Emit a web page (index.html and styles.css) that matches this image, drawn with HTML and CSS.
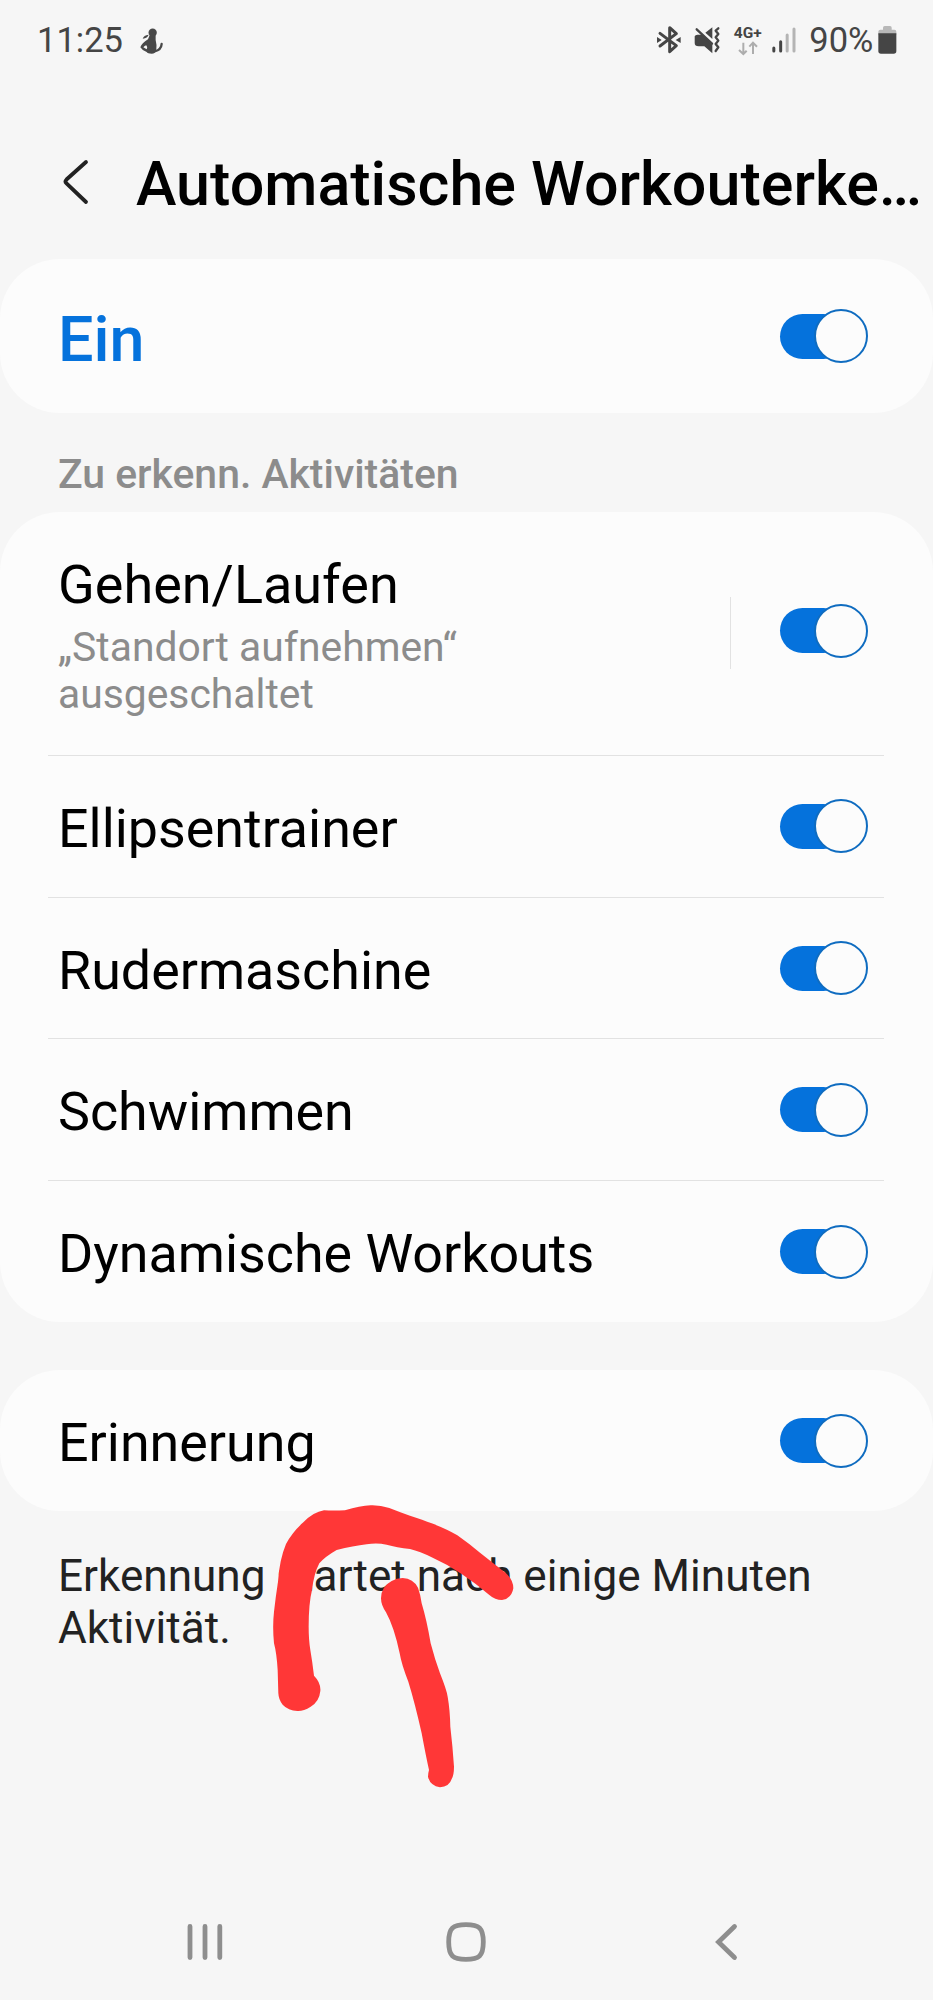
FILE: index.html
```html
<!DOCTYPE html>
<html lang="de">
<head>
<meta charset="utf-8">
<title>Automatische Workouterkennung</title>
<link rel="stylesheet" href="styles.css">
</head>
<body>
<div class="screen">
  <div class="status">
    <span class="clock">11:25</span>
    <svg class="ico-figure" viewBox="418 84 70 78"><g fill="#484848"><circle cx="456" cy="98" r="12.500"/><path d="M426 116q3-10 18-12q-3 10-18 12z"/><path d="M447 106h18v14q4 14 2 30q-2 11-14 11q-12 0-15-5q-14-5-19-14q4-12 23-24zM433 137l-5 5l10 6q4-6-1-12z" fill-rule="evenodd"/></g><path d="M462 154q20-4 21-22" fill="none" stroke="#484848" stroke-width="7" stroke-linecap="round"/></svg>
    <span class="spacer"></span>
    <svg class="ico-bt" viewBox="50 50 71 82"><path d="M59 72L108 109L88 127V55L108 73L59 110" fill="none" stroke="#454545" stroke-width="9" stroke-linejoin="round" stroke-linecap="round"/><path d="M50 83l14 9l-14 9zM121 83l-15 9l15 9z" fill="#454545"/></svg>
    <svg class="ico-mute" viewBox="160 50 80 82"><path d="M194 70L215 54V89zM162 81q2-5 8-5h16l29 30v26l-24-21h-17q-12 0-12-10z" fill="#454545"/><path d="M168 60l46 43" stroke="#454545" stroke-width="7" stroke-linecap="round"/><path d="M233 57l-8 7l8 10l-8 10l8 10l-8 10l8 10l-8 11" fill="none" stroke="#454545" stroke-width="7" stroke-linecap="round" stroke-linejoin="round"/></svg>
    <span class="net"><span class="net-label">4G+</span>
      <svg class="ico-arrows" viewBox="290 96 60 38"><path d="M306 98v33M293 120l13 12l10-10M335 132V99M324 110l11-12l12 12" fill="none" stroke="#adadad" stroke-width="6"/></svg></span>
    <svg class="ico-signal" viewBox="395 52 72 78"><g stroke-width="9" stroke-linecap="round"><path d="M400.500 115v9M421 96v28" stroke="#454545"/><path d="M440.500 76v48M461 58v66" stroke="#b4b4b4"/></g></svg>
    <span class="percent">90%</span>
    <svg class="ico-battery" viewBox="713 50 56 83"><path d="M714 76V67q0-6 6-6h8v-6q0-5 5-5h16q5 0 5 5v6h8q6 0 6 6v9z" fill="#b8b8b8"/><path d="M714 72h54v53q0 8-8 8h-38q-8 0-8-8z" fill="#454545"/></svg>
  </div>

  <header class="header">
    <svg class="back" viewBox="0 0 26 48"><path d="M24 4L4.500 21.500Q2.500 23.500 4.500 25.500L24 44" fill="none" stroke="#222" stroke-width="3.800" stroke-linecap="round"/></svg>
    <h1 class="title">Automatische Workouterke…</h1>
  </header>

  <section class="card master">
    <div class="row"><span class="master-label">Ein</span><span class="toggle"><i class="thumb"></i></span></div>
  </section>

  <h2 class="section-title">Zu erkenn. Aktivitäten</h2>

  <section class="card">
    <div class="row tall">
      <div class="text"><div class="label first">Gehen/Laufen</div><div class="sub">„Standort aufnehmen“<br>ausgeschaltet</div></div>
      <span class="vline"></span>
      <span class="toggle"><i class="thumb"></i></span>
    </div>
    <div class="row item"><span class="label">Ellipsentrainer</span><span class="toggle"><i class="thumb"></i></span></div>
    <div class="row item"><span class="label">Rudermaschine</span><span class="toggle"><i class="thumb"></i></span></div>
    <div class="row item"><span class="label">Schwimmen</span><span class="toggle"><i class="thumb"></i></span></div>
    <div class="row item"><span class="label">Dynamische Workouts</span><span class="toggle"><i class="thumb"></i></span></div>
  </section>

  <section class="card reminder">
    <div class="row item"><span class="label">Erinnerung</span><span class="toggle"><i class="thumb"></i></span></div>
  </section>
  <p class="note">Erkennung startet nach einige Minuten<br>Aktivität.</p>

  <nav class="nav">
    <svg class="nav-recents" viewBox="0 0 36 40"><path d="M3 4.500v31M18 4.500v31M32.800 4.500v31" stroke="#8e8e8e" stroke-width="4.800" stroke-linecap="round"/></svg>
    <svg class="nav-home" viewBox="0 0 40 40"><path d="M20 2.600C33 2.600 37.300 6 37.300 20S33 37.400 20 37.400S2.700 34 2.700 20S7 2.600 20 2.600z" fill="none" stroke="#8e8e8e" stroke-width="4.800"/></svg>
    <svg class="nav-back" viewBox="0 0 24 40"><path d="M20.500 4.500L4.500 20L20.500 35.500" fill="none" stroke="#8e8e8e" stroke-width="4.800" stroke-linecap="round"/></svg>
  </nav>

  <svg class="scribble" viewBox="0 0 900 990"><g fill="#ff3737">
    <path d="M85 640L83 570Q80 520 72 490Q67 440 72 395Q77 350 84 305Q88 240 108 192Q128 155 160 127Q190 96 222 91Q250 92 285 91Q330 77 362 76Q390 75 418 84Q445 95 480 107Q520 120 545 130Q590 147 622 166Q660 193 690 218L768 280Q790 300 790 325Q785 355 756 360Q735 360 718 345Q680 312 635 282Q590 252 545 232Q510 214 480 207Q440 202 410 194Q380 187 350 193Q310 198 260 210Q225 230 208 250Q192 280 186 330Q176 370 176 440Q176 480 181 510Q187 545 192 587Q213 608 211 633Q208 665 182 680Q160 694 142 693Q115 692 98 674Q86 660 85 640z"/>
    <path d="M393 355Q393 320 425 303Q440 294 458 294Q490 296 504 323Q512 345 515 370Q530 420 542 490Q555 540 570 580Q590 630 593 650Q600 690 601 740Q608 800 612 860Q612 885 605 897Q598 920 570 922Q540 917 534 890Q534 880 537 870Q528 830 515 760Q495 670 475 605Q455 555 449 520Q432 440 408 397Q393 375 393 355z"/>
  </g></svg>
</div>
</body>
</html>
```

FILE: styles.css
```css
* { box-sizing: border-box; margin: 0; padding: 0; }
body { background: #f6f6f6; font-family: Roboto, sans-serif; color: #000; }
svg { display: block; flex: none; overflow: visible; }
.screen { position: relative; width: 933px; height: 2000px; overflow: hidden; display: flex; flex-direction: column; white-space: nowrap; }
.screen > * { flex: none; }

.status { height: 80px; padding: 0 36px 0 37px; display: flex; align-items: center; color: #454545; font-size: 34.500px; line-height: 40px; }
.clock { width: 86px; }
.spacer { flex: 1; }
.ico-figure { width: 23.300px; height: 26px; margin: 2px 0 0 16.500px; }
.ico-bt { width: 23.700px; height: 27.300px; }
.ico-mute { width: 26.700px; height: 27.300px; margin-left: 13px; }
.net { width: 29px; margin-left: 12.500px; display: flex; flex-direction: column; align-items: center; gap: 2px; }
.net-label { font-size: 15.500px; line-height: 14px; font-weight: 700; }
.ico-arrows { width: 20px; height: 12.700px; }
.ico-signal { width: 24px; height: 26px; margin-left: 10px; }
.percent { width: 64px; margin-left: 13px; }
.ico-battery { width: 18.700px; height: 27.700px; margin-left: 5px; }

.header { height: 179px; padding: 28px 0 0 62px; display: flex; align-items: center; }
.back { width: 26px; height: 48px; margin-top: -4px; }
.title { margin-left: 48px; font-size: 61px; line-height: 72px; font-weight: 500; }

.card { background: #fcfcfc; border-radius: 60px; padding: 0 49px 0 48px; }
.row { display: flex; align-items: center; justify-content: space-between; padding: 0 16px 0 10px; }
.master .row { height: 154px; }
.master-label { padding-top: 7px; font-size: 62.800px; line-height: 72px; font-weight: 500; color: #0572dc; }
.section-title { height: 99px; padding: 37px 0 0 58px; font-size: 40.900px; line-height: 48px; font-weight: 500; color: #8c8c8c; }
.tall { height: 244px; padding-bottom: 6px; border-bottom: 1px solid #e2e2e2; }
.text { flex: 1; padding-top: 11px; }
.label { padding-top: 5px; font-size: 53.800px; line-height: 62px; }
.label.first { padding: 0; margin-bottom: 8px; font-size: 54px; }
.sub { font-size: 40.850px; line-height: 47.300px; color: #8c8c8c; }
.vline { width: 1px; height: 72px; margin: 5px 49px 0 0; background: #e2e2e2; }
.item { height: 141.700px; border-bottom: 1px solid #e2e2e2; }
.item:last-child { height: 141px; border-bottom: 0; }
.reminder { margin-top: 48px; }
.reminder .item { height: 141px; }

.toggle { flex: none; display: flex; align-items: center; width: 88px; height: 54px; }
.toggle::before { content: ""; width: 66px; height: 45px; border-radius: 22.500px; background: #0572dc; }
.thumb { width: 54px; height: 54px; margin-left: -32px; border-radius: 50%; border: 2px solid #0f6cc0; background: #fcfcfc; flex: none; }

.note { padding: 39px 0 0 58px; font-size: 44.100px; line-height: 52px; color: #222; }
.nav { height: 40px; margin-top: 268px; padding: 0 195px 0 187px; display: flex; justify-content: space-between; }
.nav-recents { width: 36px; height: 40px; }
.nav-home { width: 40px; height: 40px; margin-right: 6px; }
.nav-back { width: 24px; height: 40px; }

.scribble { position: absolute; left: 250px; top: 1480px; width: 300px; height: 330px; }
```
